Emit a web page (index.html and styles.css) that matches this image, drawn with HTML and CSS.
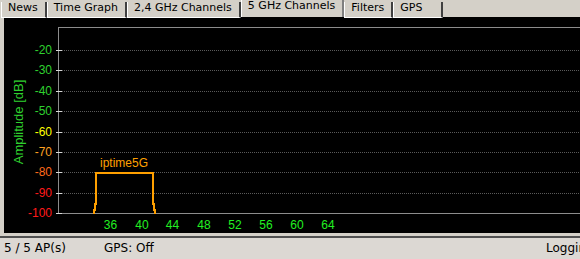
FILE: index.html
```html
<!DOCTYPE html>
<html lang="en">

<head>
    <meta charset="UTF-8">
    <title>5 GHz Channels</title>
    <link rel="stylesheet" href="styles.css">
</head>

<body>
    <div class="tabs">
        <div class="tab">News</div>
        <div class="tab">Time Graph</div>
        <div class="tab">2,4 GHz Channels</div>
        <div class="tab active">5 GHz Channels</div>
        <div class="tab">Filters</div>
        <div class="tab wide">GPS</div>
    </div>

    <div class="panel">
        <svg class="chart" width="576" height="216" viewBox="4 17 576 216">
            <!-- frame -->
            <line class="axis" x1="58" y1="27.5" x2="580" y2="27.5" />
            <line class="axis" x1="58.5" y1="27" x2="58.5" y2="214" />
            <line class="axis" x1="58" y1="213.5" x2="580" y2="213.5" />

            <!-- grid -->
            <g class="grid">
                <line x1="62" y1="50.5" x2="580" y2="50.5" />
                <line x1="62" y1="70.5" x2="580" y2="70.5" />
                <line x1="62" y1="91.5" x2="580" y2="91.5" />
                <line x1="62" y1="111.5" x2="580" y2="111.5" />
                <line x1="62" y1="132.5" x2="580" y2="132.5" />
                <line x1="62" y1="152.5" x2="580" y2="152.5" />
                <line x1="62" y1="172.5" x2="580" y2="172.5" />
                <line x1="62" y1="193.5" x2="580" y2="193.5" />
            </g>
            <g class="ticks">
                <line x1="56" y1="50.5" x2="62" y2="50.5" />
                <line x1="56" y1="70.5" x2="62" y2="70.5" />
                <line x1="56" y1="91.5" x2="62" y2="91.5" />
                <line x1="56" y1="111.5" x2="62" y2="111.5" />
                <line x1="56" y1="132.5" x2="62" y2="132.5" />
                <line x1="56" y1="152.5" x2="62" y2="152.5" />
                <line x1="56" y1="172.5" x2="62" y2="172.5" />
                <line x1="56" y1="193.5" x2="62" y2="193.5" />
                <line x1="56" y1="213.5" x2="62" y2="213.5" />
            </g>

            <!-- y labels -->
            <g class="ylabels">
                <text class="good" x="52" y="53.5">-20</text>
                <text class="good" x="52" y="74">-30</text>
                <text class="good" x="52" y="94.5">-40</text>
                <text class="good" x="52" y="114.5">-50</text>
                <text class="fair" x="52" y="135.5">-60</text>
                <text class="weak" x="52" y="155.5">-70</text>
                <text class="poor" x="52" y="176">-80</text>
                <text class="bad" x="52" y="196.5">-90</text>
                <text class="bad" x="52" y="217">-100</text>
            </g>
            <text class="ytitle" transform="translate(22.5 122) rotate(-90)">Amplitude [dB]</text>

            <!-- x labels -->
            <g class="xlabels">
                <text x="110.5" y="229">36</text>
                <text x="142" y="229">40</text>
                <text x="172.5" y="229">44</text>
                <text x="204" y="229">48</text>
                <text x="235" y="229">52</text>
                <text x="266" y="229">56</text>
                <text x="297" y="229">60</text>
                <text x="328" y="229">64</text>
            </g>

            <!-- networks -->
            <polyline class="ap" points="94,214 94,210 95,210 95,204 96,204 96,173 153,173 153,204 154,204 154,210 155,210 155,214" />
            <text class="ap-name" x="124" y="167">iptime5G</text>
        </svg>
    </div>

    <div class="status">
        <span>5 / 5 AP(s)</span>
        <span>GPS: Off</span>
        <span>Logging</span>
    </div>
</body>

</html>
```

FILE: styles.css
```css
body {
    margin: 0;
    width: 580px;
    height: 259px;
    overflow: hidden;
    background: #d4d0c8;
    font-family: 'DejaVu Sans', sans-serif;
    font-size: 11px;
    color: #000;
}

.tabs {
    display: flex;
    height: 16px;
    margin-bottom: 1px;
    padding-left: 1px;
}

.tab {
    box-sizing: border-box;
    height: 16px;
    margin-top: 2px;
    padding: 0 7px 0 6px;
    line-height: 12px;
    white-space: nowrap;
    border-left: 1px solid #fff;
    border-right: 2px solid #404040;
    border-bottom: 1px solid #fff;
}

.tab.active {
    margin-top: 0;
    height: 17px;
    margin-bottom: -1px;
    border-right: 2px solid #808080;
    border-bottom: none;
    line-height: 11px;
}

.tab.wide {
    padding-right: 19px;
}

.panel {
    margin-left: 4px;
    height: 216px;
    background: #000;
}

.chart {
    display: block;
    font-family: 'Liberation Sans', sans-serif;
    font-size: 12px;
}

.axis {
    stroke: #8c8c8c;
    stroke-width: 1;
}

.grid line {
    stroke: #5a5a5a;
    stroke-width: 1;
    stroke-dasharray: 1 1;
}

.ticks line {
    stroke: #d8d8d8;
    stroke-width: 1;
}

.ylabels text {
    text-anchor: end;
}

.good { fill: #2fd12f; }
.fair { fill: #ffff00; }
.weak { fill: #ffa020; }
.poor { fill: #ff6a1a; }
.bad { fill: #ff1a1a; }

.ytitle {
    fill: #2fd12f;
    font-size: 13px;
    text-anchor: middle;
}

.xlabels text {
    fill: #22f022;
    text-anchor: middle;
}

.ap {
    fill: none;
    stroke: #ffa000;
    stroke-width: 2;
}

.ap-name {
    fill: #ffa000;
    text-anchor: middle;
}

.status {
    display: grid;
    grid-template-columns: 100px 442px 1fr;
    margin-top: 3px;
    padding-left: 4px;
    height: 21px;
    border-top: 2px solid #505050;
    background: #dcd8d3;
    font-size: 12px;
    line-height: 21px;
    white-space: nowrap;
}
```
